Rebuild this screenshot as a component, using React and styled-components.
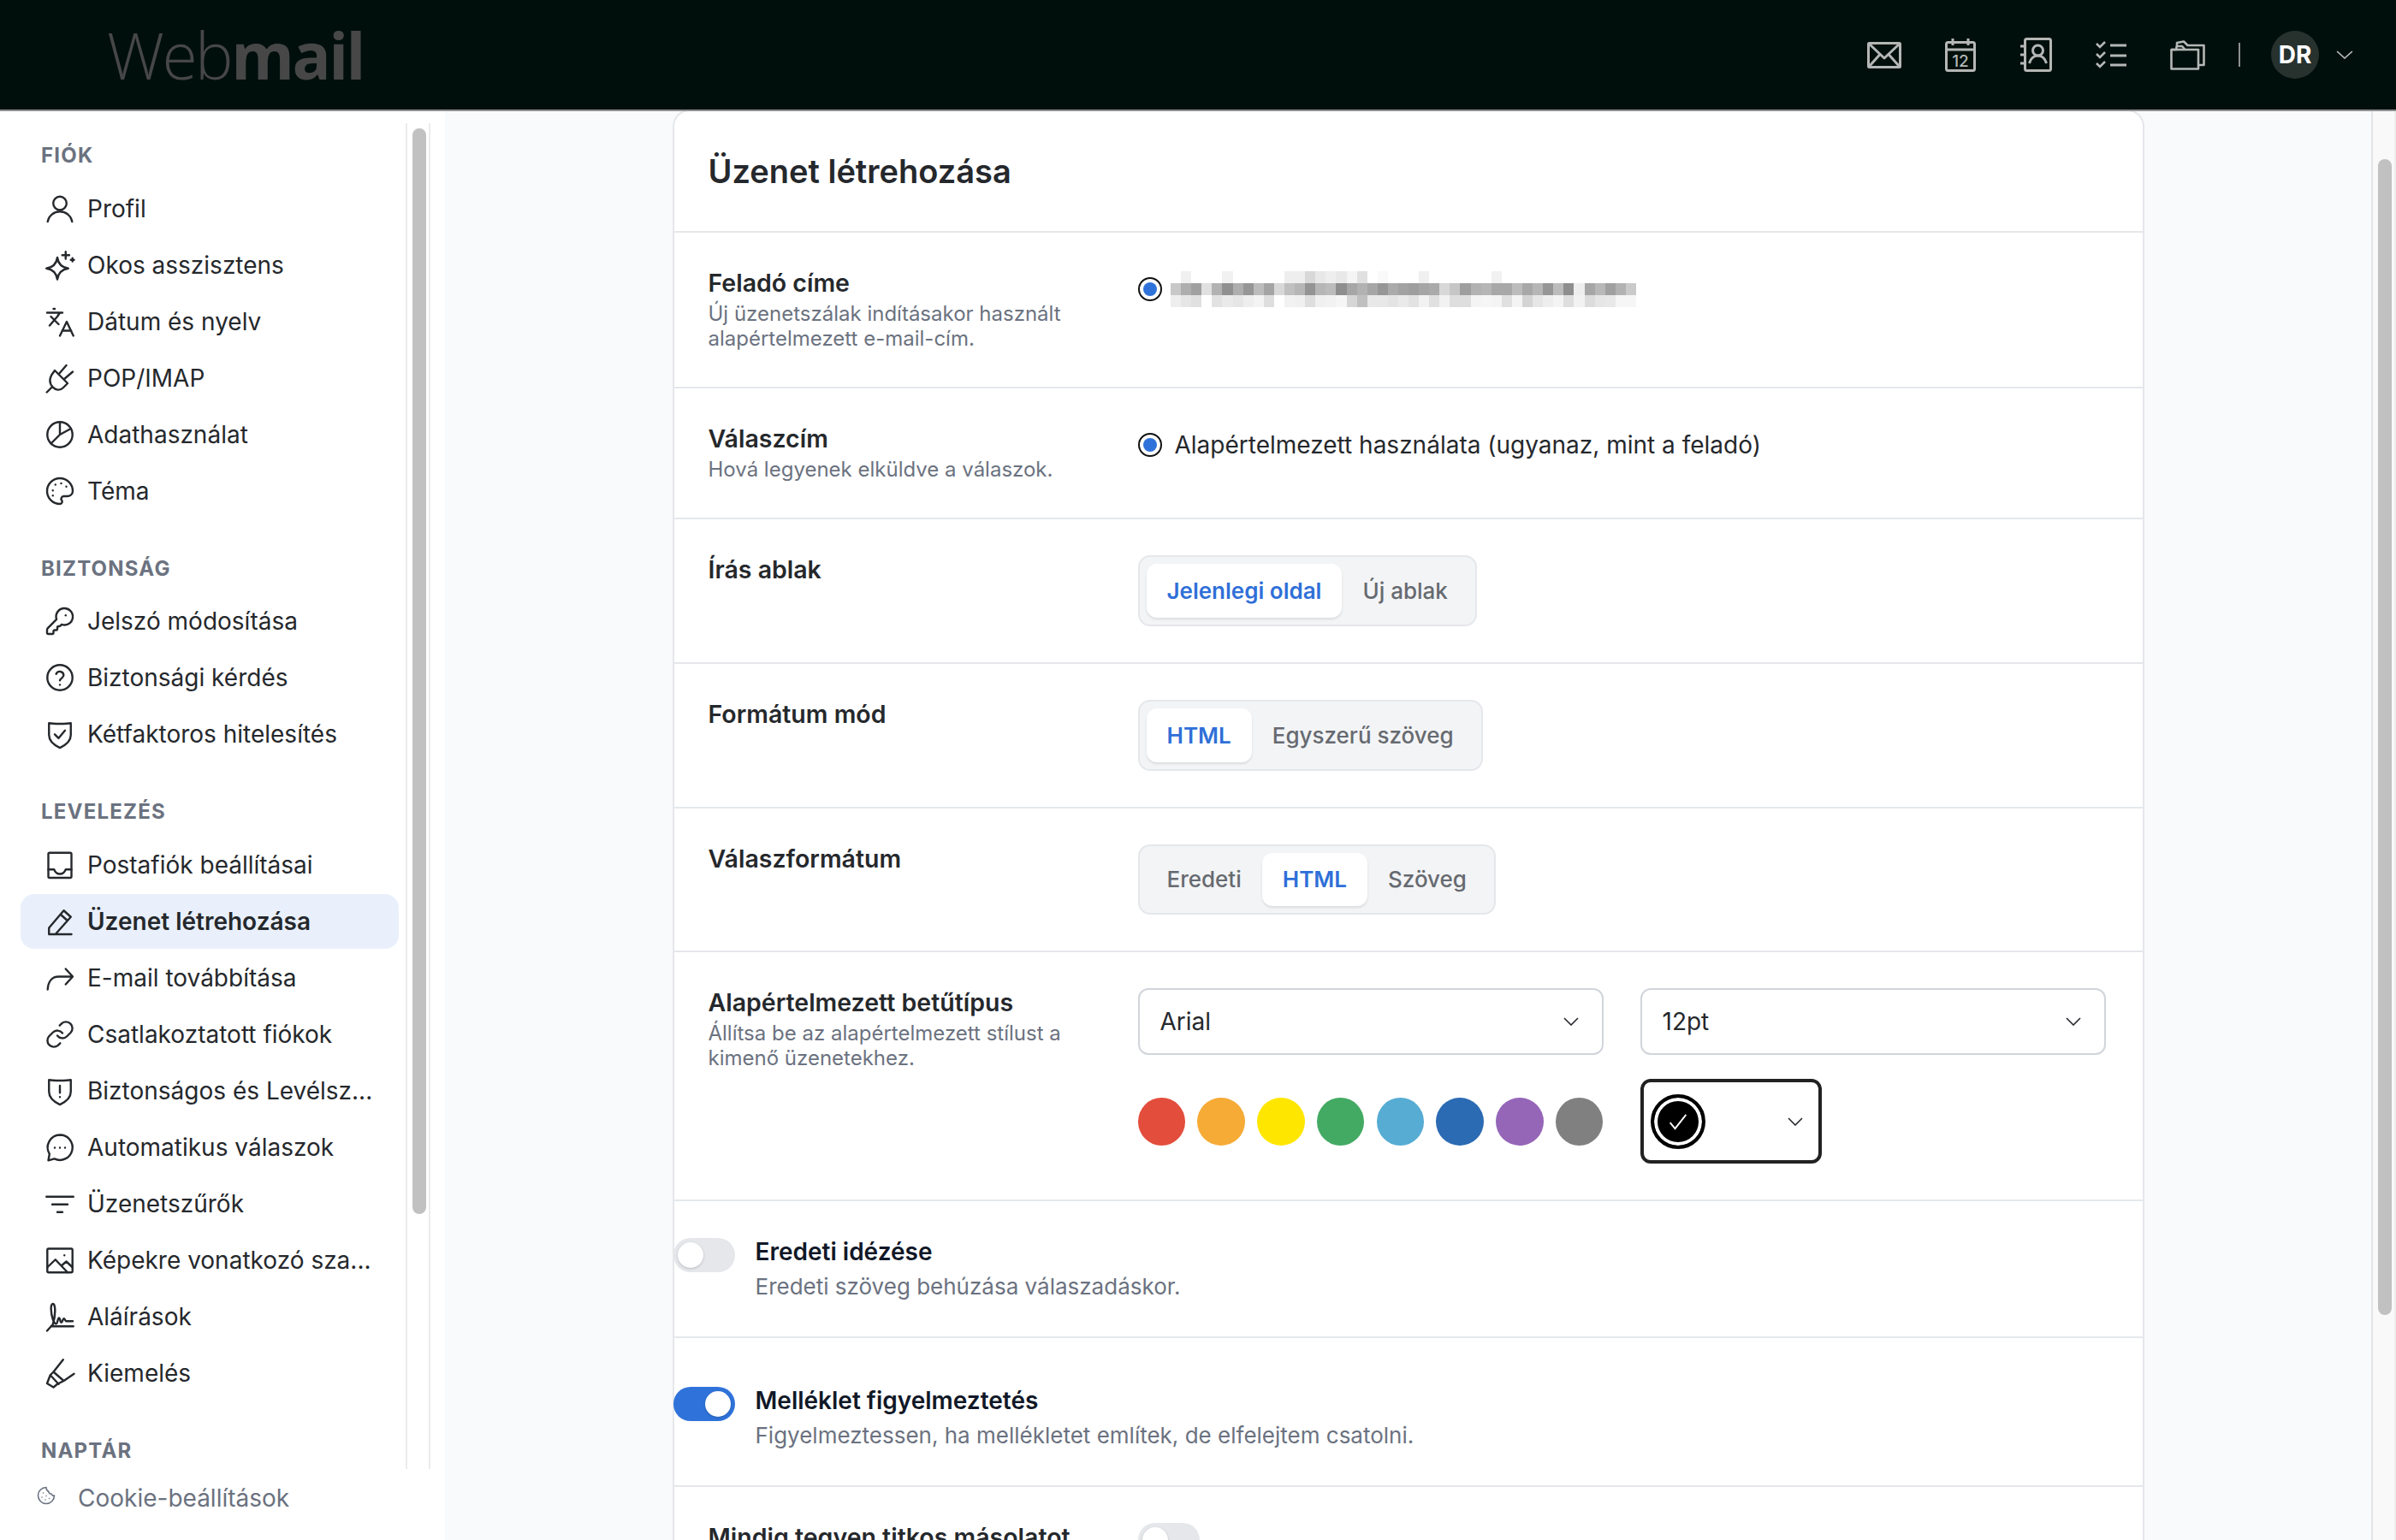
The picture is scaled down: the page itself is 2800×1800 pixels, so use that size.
import React from 'react'
import styled, { createGlobalStyle } from 'styled-components'

const GlobalStyle = createGlobalStyle`
  html, body { margin: 0; padding: 0; height: 100%; overflow: hidden; }
  body { font-family: Inter, "Liberation Sans", sans-serif; color: #25282c; background: #fff; }
  * { box-sizing: border-box; }
`

const paths = {
  user: <><circle cx="12" cy="7.7" r="5.2" /><path d="M2.5 22c.9-4.600 4.700-7.800 9.500-7.800s8.600 3.200 9.500 7.800" /></>,
  sparkle: <><path d="M10 6c.7 5 3.400 7.700 8.500 8.500-5.100.8-7.800 3.500-8.500 8.500-.7-5-3.400-7.700-8.500-8.500C6.600 13.700 9.300 11 10 6z" /><path d="M16.500 1.500v5.500M13.800 4.200h5.500M21.800 6.500v2.500M20.500 7.800h2.500" /></>,
  language: <><path d="M5 8l6 6M4 15l6-7 2-3M2 5h12M7 2h1M22.500 23l-5.200-11-5.300 11M13.800 19h7" /></>,
  plug: <><path d="M8 6l10 10-3.500 3.500c-2.500 2.500-5.800 1.800-8-.4S3.500 13.500 5.500 9.500zM11 9l6-7M15 13l7-6M5.800 19L1.800 23" /></>,
  pie: <><circle cx="12" cy="12" r="9.800" /><path d="M12 2.500V12l8.500-4.700M12 12l-7 7" /></>,
  palette: <><path d="M12 22a10 10 0 1 1 10-10c0 2.500-2 4-4.500 4H15a2 2 0 0 0-1.500 3.300c.5.700.4 2.700-1.500 2.700z" /><path d="M6.500 11.500h.01M8.500 7h.01M13 6h.01M17 8.500h.01M6.500 15.500h.01" /></>,
  key: <><path d="M2.600 17.400A2 2 0 0 0 2 18.800V21a1 1 0 0 0 1 1h3a1 1 0 0 0 1-1v-1a1 1 0 0 1 1-1h1a1 1 0 0 0 1-1v-1a1 1 0 0 1 1-1h.2a2 2 0 0 0 1.400-.6l.8-.8a6.500 6.500 0 1 0-4-4z" /><path d="M16.500 7.500h.01" /></>,
  question: <><circle cx="12" cy="12" r="9.800" /><path d="M9.100 9.200a3 3 0 0 1 5.800 1c0 2-2.900 2.600-2.900 4M12 17.600h.01" /></>,
  shieldCheck: <><path d="M3.500 3.500c3 .7 14 .7 17 0v9.200c0 4.500-3.700 7.800-8.500 10-4.800-2.200-8.500-5.500-8.500-10z" /><path d="M8 12.200l3 3 5-6" /></>,
  inbox: <><rect x="3" y="2.500" width="18" height="19.500" rx="1" /><path d="M3 15.500h4.500c1 2.600 2.500 3.500 4.500 3.500s3.500-.9 4.500-3.500H21" /></>,
  pencil: <><path d="M3.500 22v-5L15 3.500l5.500 5L8.500 22zM3.500 22h17.500M12.500 6.500l5.500 5" /></>,
  forward: <><path d="M2.500 21c.3-6.300 3.500-10 8.500-10h10.500M16.500 5l5.500 6-5.500 6" /></>,
  link: <><path d="M10 13a5 5 0 0 0 7.500.5l3-3a5 5 0 0 0-7-7.100l-1.700 1.700" /><path d="M14 11a5 5 0 0 0-7.500-.5l-3 3a5 5 0 0 0 7 7.100l1.700-1.700" /></>,
  shieldAlert: <><path d="M3.500 3.500c3 .7 14 .7 17 0v9.200c0 4.500-3.700 7.800-8.500 10-4.800-2.200-8.500-5.500-8.500-10z" /><path d="M12 8v5.500M12 16.800h.01" /></>,
  chat: <><path d="M12 2.300a9.800 9.800 0 1 1-4.300 18.600L3 22.200l.9-5A9.800 9.800 0 0 1 12 2.300z" /><path d="M8 12.300h.01M12 12.300h.01M16 12.300h.01" /></>,
  filter: <><path d="M1.500 6.500h21M6 12.500h12M10 18.500h4" /></>,
  image: <><rect x="2.200" y="3" width="19.600" height="18.500" rx="1" /><path d="M2.200 17.500l6.300-6 9.500 10M13.500 16l3.500-3 4.800 4.500M15.500 8.200h.01" /></>,
  signature: <><path d="M2 23l4.500-5C8.500 12 9 2 6.500 2 4.300 2 5 9.500 6.500 14c.7 2 1.500 3.500 2.500 3.500 1.300 0 1.200-4.500 2.300-4.500s.7 3.500 1.800 3.500 1-3 2-3 .9 2 2 2H22M5 19.500h17.500" /></>,
  highlighter: <><path d="M14.500 1.500L7 11l8 7 8-5.500M7 11l-2.500 2.500L2 20l5 3 3-2.500 5-2.500M4.500 13.500l6.500 7" /></>,
  cookie: <><path d="M12 2.500a9.500 9.500 0 1 0 9.500 9.500c-1.600.5-3.100-.5-3.300-2-1.800.3-3.500-1-3.500-3-1.500 0-2.700-2.500-2.700-4.500z" /><path d="M8.500 9h.01M15.500 15.500h.01M12 12.500h.01M11 17h.01M7 14h.01" /></>,
}

const sections = [
  { title: 'FIÓK', items: [['user', 'Profil'], ['sparkle', 'Okos asszisztens'], ['language', 'Dátum és nyelv'], ['plug', 'POP/IMAP'], ['pie', 'Adathasználat'], ['palette', 'Téma']] },
  { title: 'BIZTONSÁG', items: [['key', 'Jelszó módosítása'], ['question', 'Biztonsági kérdés'], ['shieldCheck', 'Kétfaktoros hitelesítés']] },
  { title: 'LEVELEZÉS', items: [['inbox', 'Postafiók beállításai'], ['pencil', 'Üzenet létrehozása', true], ['forward', 'E-mail továbbítása'], ['link', 'Csatlakoztatott fiókok'], ['shieldAlert', 'Biztonságos és Levélsz...'], ['chat', 'Automatikus válaszok'], ['filter', 'Üzenetszűrők'], ['image', 'Képekre vonatkozó sza...'], ['signature', 'Aláírások'], ['highlighter', 'Kiemelés']] },
  { title: 'NAPTÁR', items: [] },
]

const mosaicRows = [
  'ff f0 ff ff ff f1 ff ff ff ff ff ee ee d8 e8 ee e8 f4 e0 ff f9 ff ff ff f0 ff ff ff ff ff ff f1 ff ff ff ff ff ff ff ff ff ff ff ff ff',
  'c8 ae a0 e0 b2 90 ae 96 bc a4 d8 c0 b6 94 b6 bc 8e a6 b2 a6 96 aa a2 9e a6 aa d8 c6 9e b2 b6 a8 a8 bc a8 b6 96 bc 8e ee a6 b8 a0 b2 ca',
  'ee e6 e0 ff e2 ea e6 ee f4 de ff f2 f0 de f0 f2 f6 d6 c0 e8 e8 e4 ea e2 f2 e0 f2 de de f4 f6 f4 e0 f4 d4 e6 ee f4 de f2 dc e6 e8 f6 f6',
].map((row) => row.split(' '))

const swatches = ['#e34d3c', '#f5ab35', '#ffe600', '#43aa63', '#56acd3', '#2b6bb3', '#9566b8', '#808080']

function Glyph({ name, size = 36 }) {
  return (
    <GlyphSvg $size={size} viewBox="0 0 24 24">{paths[name]}</GlyphSvg>
  )
}

function Chevron({ width = 18, height = 10, color = '#25282c' }) {
  return (
    <svg width={width} height={height} viewBox="0 0 18 10" preserveAspectRatio="none" fill="none" stroke={color} strokeWidth="1.6">
      <path d="M1 1l8 8 8-8" />
    </svg>
  )
}

function HeaderIcons() {
  return (
    <>
      <IconSlot>
        <svg width="40" height="31" viewBox="0 0 40 31" fill="none" stroke="#b4b7b5" strokeWidth="3" strokeLinejoin="round">
          <rect x="1.500" y="1.500" width="37" height="28" rx="1" />
          <path d="M2 2l18 17L38 2M2 29l13-14.500M38 29L25 14.500" />
        </svg>
      </IconSlot>
      <IconSlot>
        <svg width="36" height="40" viewBox="0 0 36 40" fill="none" stroke="#b4b7b5" strokeWidth="3">
          <rect x="1.500" y="5.500" width="33" height="33" rx="2" />
          <path d="M2 14h32M9 1v8M27 1v8" />
          <CalendarDay x="18" y="33.500">12</CalendarDay>
        </svg>
      </IconSlot>
      <IconSlot>
        <svg width="38" height="40" viewBox="0 0 38 40" fill="none" stroke="#b4b7b5" strokeWidth="3">
          <rect x="6.500" y="1.500" width="30" height="37" rx="2" />
          <path d="M1 10h6M1 20h6M1 30h6" />
          <circle cx="21.500" cy="15" r="6" />
          <path d="M11.500 30c1.500-5.500 5.500-9 10-9s8.500 3.500 10 9" />
        </svg>
      </IconSlot>
      <IconSlot>
        <svg width="37" height="32" viewBox="0 0 37 32" fill="none" stroke="#b4b7b5" strokeWidth="3">
          <path d="M1 3l4 4 6-6M1 15l4 4 6-6M1 26l4 4 6-6" strokeWidth="2.600" />
          <path d="M17 5h19M17 17h19M17 28h19" />
        </svg>
      </IconSlot>
      <IconSlot>
        <svg width="41" height="35" viewBox="0 0 41 35" fill="none" stroke="#b4b7b5" strokeWidth="2.600" strokeLinejoin="round">
          <path d="M1.500 33.500V11h6V7.500a1 1 0 0 1 .5-.5h6l3.500 4H33v22.500z" />
          <path d="M8 6V3l8-1.500L20.500 6h19v23H33" />
          <path d="M1.500 11h16" />
        </svg>
      </IconSlot>
    </>
  )
}

function Radio({ children }) {
  return (
    <RadioLine>
      <RadioOuter><RadioDot /></RadioOuter>
      {children}
    </RadioLine>
  )
}

function Mosaic() {
  return (
    <MosaicSvg width="544" height="42" viewBox="0 0 540 42" preserveAspectRatio="none" shapeRendering="crispEdges">
      {mosaicRows.map((row, r) => row.map((v, c) => (
        <rect key={`${r}-${c}`} x={c * 12} y={r * 14} width="12" height="14" fill={`#${v}${v}${v}`} />
      )))}
    </MosaicSvg>
  )
}

function Segmented({ options, active }) {
  return (
    <SegGroup>
      {options.map((o) => <SegButton key={o} $active={o === active}>{o}</SegButton>)}
    </SegGroup>
  )
}

export default function App() {
  return (
    <Page>
      <GlobalStyle />
      <Header>
        <Logo>Web<b>mail</b></Logo>
        <HeaderIcons />
        <HeaderSep />
        <Avatar>DR</Avatar>
        <HeaderChevron><Chevron width={20} height={10} color="#b4b7b5" /></HeaderChevron>
      </Header>
      <Body>
        <Sidebar>
          <SideTop>
            <SideList>
              {sections.map((s) => (
                <Section key={s.title}>
                  <SectionTitle>{s.title}</SectionTitle>
                  {s.items.map(([icon, label, active]) => (
                    <NavItem key={label} $active={active}>
                      <Glyph name={icon} />
                      <span>{label}</span>
                    </NavItem>
                  ))}
                </Section>
              ))}
            </SideList>
            <SideTrack><SideThumb /></SideTrack>
          </SideTop>
          <CookieBar>
            <CookieIcon><Glyph name="cookie" size={24} /></CookieIcon>
            <span>Cookie-beállítások</span>
          </CookieBar>
        </Sidebar>
        <Main>
          <Card>
            <CardTitle>Üzenet létrehozása</CardTitle>
            <Row>
              <div>
                <Label>Feladó címe</Label>
                <Hint>Új üzenetszálak indításakor használt alapértelmezett e-mail-cím.</Hint>
              </div>
              <Radio><Mosaic /></Radio>
            </Row>
            <Row>
              <div>
                <Label>Válaszcím</Label>
                <Hint>Hová legyenek elküldve a válaszok.</Hint>
              </div>
              <Radio><RadioText>Alapértelmezett használata (ugyanaz, mint a feladó)</RadioText></Radio>
            </Row>
            <Row>
              <Label>Írás ablak</Label>
              <Segmented options={['Jelenlegi oldal', 'Új ablak']} active="Jelenlegi oldal" />
            </Row>
            <Row>
              <Label>Formátum mód</Label>
              <Segmented options={['HTML', 'Egyszerű szöveg']} active="HTML" />
            </Row>
            <Row>
              <Label>Válaszformátum</Label>
              <Segmented options={['Eredeti', 'HTML', 'Szöveg']} active="HTML" />
            </Row>
            <Row>
              <div>
                <Label>Alapértelmezett betűtípus</Label>
                <Hint>Állítsa be az alapértelmezett stílust a kimenő üzenetekhez.</Hint>
              </div>
              <FontGrid>
                <Select>Arial<Chevron /></Select>
                <Select>12pt<Chevron /></Select>
                <Swatches>
                  {swatches.map((c) => <Swatch key={c} $color={c} />)}
                </Swatches>
                <ColorSelect>
                  <ColorPicked>
                    <svg width="28" height="28" viewBox="0 0 24 24" fill="none" stroke="#fff" strokeWidth="1.600"><path d="M4 13l5 6L20 5" /></svg>
                  </ColorPicked>
                  <Chevron />
                </ColorSelect>
              </FontGrid>
            </Row>
            <ToggleRow>
              <Toggle />
              <div>
                <ToggleTitle>Eredeti idézése</ToggleTitle>
                <ToggleHint>Eredeti szöveg behúzása válaszadáskor.</ToggleHint>
              </div>
            </ToggleRow>
            <ToggleRow $extraTop>
              <Toggle $on />
              <div>
                <ToggleTitle>Melléklet figyelmeztetés</ToggleTitle>
                <ToggleHint>Figyelmeztessen, ha mellékletet említek, de elfelejtem csatolni.</ToggleHint>
              </div>
            </ToggleRow>
            <Row>
              <Label>Mindig tegyen titkos másolatot</Label>
              <Toggle />
            </Row>
          </Card>
        </Main>
        <PageTrack><PageThumb /></PageTrack>
      </Body>
    </Page>
  )
}

const Page = styled.div`
  height: 100vh;
  display: flex;
  flex-direction: column;
  overflow: hidden;
`
const Header = styled.header`
  position: relative;
  z-index: 2;
  height: 130px;
  flex: none;
  display: flex;
  align-items: center;
  padding-right: 50px;
  background: #010f0c;
  border-bottom: 2px solid #8e9091;
`
const Logo = styled.div`
  margin-left: 125px;
  margin-right: auto;
  font-family: "Open Sans", sans-serif;
  font-size: 75px;
  font-weight: 300;
  letter-spacing: -2.500px;
  line-height: 1;
  color: #474747;
  b { font-weight: 700; }
`
const IconSlot = styled.div`
  width: 88.5px;
  display: flex;
  justify-content: center;
`
const CalendarDay = styled.text`
  font-family: Inter, sans-serif;
  font-size: 19px;
  font-weight: 500;
  fill: #b4b7b5;
  stroke: none;
  text-anchor: middle;
`
const HeaderSep = styled.div`
  width: 2px;
  height: 28px;
  margin-left: 15.5px;
  background: #8e9091;
`
const Avatar = styled.div`
  width: 56px;
  height: 56px;
  margin-left: 36px;
  border-radius: 50%;
  background: #27322f;
  color: #fff;
  font-size: 28px;
  font-weight: 700;
  display: flex;
  align-items: center;
  justify-content: center;
`
const HeaderChevron = styled.div`
  margin-left: 20px;
  display: flex;
`
const Body = styled.div`
  flex: 1;
  min-height: 0;
  display: flex;
`
const Sidebar = styled.aside`
  width: 520px;
  flex: none;
  display: flex;
  flex-direction: column;
  background: #fff;
`
const SideTop = styled.div`
  flex: 1;
  min-height: 0;
  display: flex;
  padding: 14px 17px 0 0;
`
const SideList = styled.nav`
  flex: 1;
  min-width: 0;
  overflow: hidden;
  padding: 23px 8px 0 24px;
`
const Section = styled.section`
  margin-bottom: 44px;
`
const SectionTitle = styled.div`
  height: 30px;
  margin: 0 0 14.5px 24px;
  font-size: 24px;
  line-height: 30px;
  font-weight: 700;
  letter-spacing: 1.200px;
  color: #6b7280;
`
const NavItem = styled.div`
  height: 64px;
  margin-bottom: 2px;
  padding-left: 28px;
  display: flex;
  align-items: center;
  gap: 14px;
  border-radius: 16px;
  font-size: 28px;
  white-space: nowrap;
  font-weight: ${(p) => (p.$active ? 600 : 400)};
  background: ${(p) => (p.$active ? '#e9f0fb' : 'transparent')};
`
const GlyphSvg = styled.svg`
  width: ${(p) => p.$size}px;
  height: ${(p) => p.$size}px;
  flex: none;
  fill: none;
  stroke: currentColor;
  stroke-width: 1.6;
  stroke-linecap: round;
  stroke-linejoin: round;
`
const SideTrack = styled.div`
  width: 29px;
  flex: none;
  padding: 6px 6px 0;
  border-left: 2px solid #ebebeb;
  border-right: 2px solid #ebebeb;
`
const SideThumb = styled.div`
  width: 16px;
  height: 1269px;
  border-radius: 8px;
  background: #c1c1c1;
`
const CookieBar = styled.div`
  height: 83px;
  flex: none;
  display: flex;
  align-items: center;
  padding: 0 0 16px 42px;
  gap: 25px;
  font-size: 28px;
  color: #6b7280;
`
const CookieIcon = styled.div`
  display: flex;
  margin-top: -6px;
`
const Main = styled.main`
  flex: 1;
  min-width: 0;
  overflow: hidden;
  background: #f9fafb;
  display: flex;
  justify-content: center;
  align-items: flex-start;
`
const Card = styled.div`
  width: 1720px;
  margin-top: -2px;
  flex: none;
  background: #fff;
  border: 2px solid #e5e7eb;
  border-radius: 20px;
`
const CardTitle = styled.h1`
  height: 142px;
  margin: 0;
  padding: 0 40px;
  display: flex;
  align-items: center;
  font-size: 38px;
  font-weight: 600;
  border-bottom: 2px solid #e5e7eb;
`
const Row = styled.div`
  display: grid;
  grid-template-columns: 502px 1fr;
  align-items: start;
  padding: 42px 40px;
  border-bottom: 2px solid #e5e7eb;
`
const Label = styled.div`
  font-size: 28.500px;
  line-height: 34px;
  font-weight: 600;
`
const Hint = styled.div`
  width: 450px;
  margin-top: 4px;
  font-size: 24px;
  line-height: 29px;
  color: #6b7280;
`
const RadioLine = styled.div`
  display: flex;
  align-items: center;
  padding-top: 3px;
  height: 45px;
  font-size: 28px;
`
const RadioOuter = styled.div`
  width: 28px;
  height: 28px;
  flex: none;
  border: 2px solid #111;
  border-radius: 50%;
  display: flex;
  align-items: center;
  justify-content: center;
`
const RadioDot = styled.div`
  width: 16px;
  height: 16px;
  border-radius: 50%;
  background: #2f73da;
`
const RadioText = styled.span`
  margin-left: 15px;
  white-space: nowrap;
`
const MosaicSvg = styled.svg`
  margin-left: 10px;
`
const SegGroup = styled.div`
  justify-self: start;
  display: inline-flex;
  padding: 8px;
  border: 2px solid #e5e7eb;
  border-radius: 14px;
  background: #f3f4f6;
`
const SegButton = styled.div`
  height: 62.750px;
  padding: 0 24px;
  display: flex;
  align-items: center;
  border-radius: 12px;
  white-space: nowrap;
  font-size: 26px;
  font-weight: ${(p) => (p.$active ? 600 : 500)};
  color: ${(p) => (p.$active ? '#2f6fd8' : '#666a70')};
  background: ${(p) => (p.$active ? '#fff' : 'transparent')};
  box-shadow: ${(p) => (p.$active ? '0 2px 3px rgba(0,0,0,.1)' : 'none')};
`
const FontGrid = styled.div`
  display: grid;
  grid-template-columns: 544px 544px;
  column-gap: 43px;
  row-gap: 28px;
  align-items: center;
`
const Select = styled.div`
  height: 78px;
  padding: 0 27px 0 24px;
  display: flex;
  align-items: center;
  justify-content: space-between;
  border: 2px solid #d1d5db;
  border-radius: 12px;
  font-size: 28px;
`
const Swatches = styled.div`
  display: flex;
  gap: 14.400px;
`
const Swatch = styled.div`
  width: 56px;
  height: 56px;
  border-radius: 50%;
  background: ${(p) => p.$color};
`
const ColorSelect = styled.div`
  width: 212px;
  height: 99px;
  padding: 0 18px 0 8px;
  display: flex;
  align-items: center;
  justify-content: space-between;
  border: 4px solid #222;
  border-radius: 12px;
`
const ColorPicked = styled.div`
  width: 64px;
  height: 64px;
  display: flex;
  align-items: center;
  justify-content: center;
  border-radius: 50%;
  background: #000;
  border: 4px solid #000;
  box-shadow: inset 0 0 0 4px #fff;
`
const ToggleRow = styled.div`
  display: flex;
  align-items: flex-start;
  gap: 24px;
  margin-left: -1px;
  padding: ${(p) => (p.$extraTop ? '57px' : '43px')} 40px 40px 0;
  border-bottom: 2px solid #e5e7eb;
`
const Toggle = styled.div`
  position: relative;
  width: 72px;
  height: 40px;
  flex: none;
  border-radius: 20px;
  background: ${(p) => (p.$on ? '#2f73da' : '#e5e7eb')};
  &::after {
    content: "";
    position: absolute;
    top: 5px;
    left: ${(p) => (p.$on ? '37px' : '5px')};
    width: 30px;
    height: 30px;
    border-radius: 50%;
    background: #fff;
    box-shadow: 0 1px 3px rgba(0,0,0,.2);
  }
`
const ToggleTitle = styled.div`
  font-size: 28px;
  line-height: 33px;
  font-weight: 600;
  color: #111827;
`
const ToggleHint = styled.div`
  margin-top: 6px;
  font-size: 26px;
  line-height: 36px;
  color: #6b7280;
`
const PageTrack = styled.div`
  width: 29px;
  flex: none;
  padding: 56px 6px 0;
  background: #f9f9f9;
  border-left: 2px solid #e5e5e5;
  border-right: 2px solid #ededed;
`
const PageThumb = styled.div`
  width: 16px;
  height: 1351px;
  border-radius: 8px;
  background: #c1c1c1;
`
